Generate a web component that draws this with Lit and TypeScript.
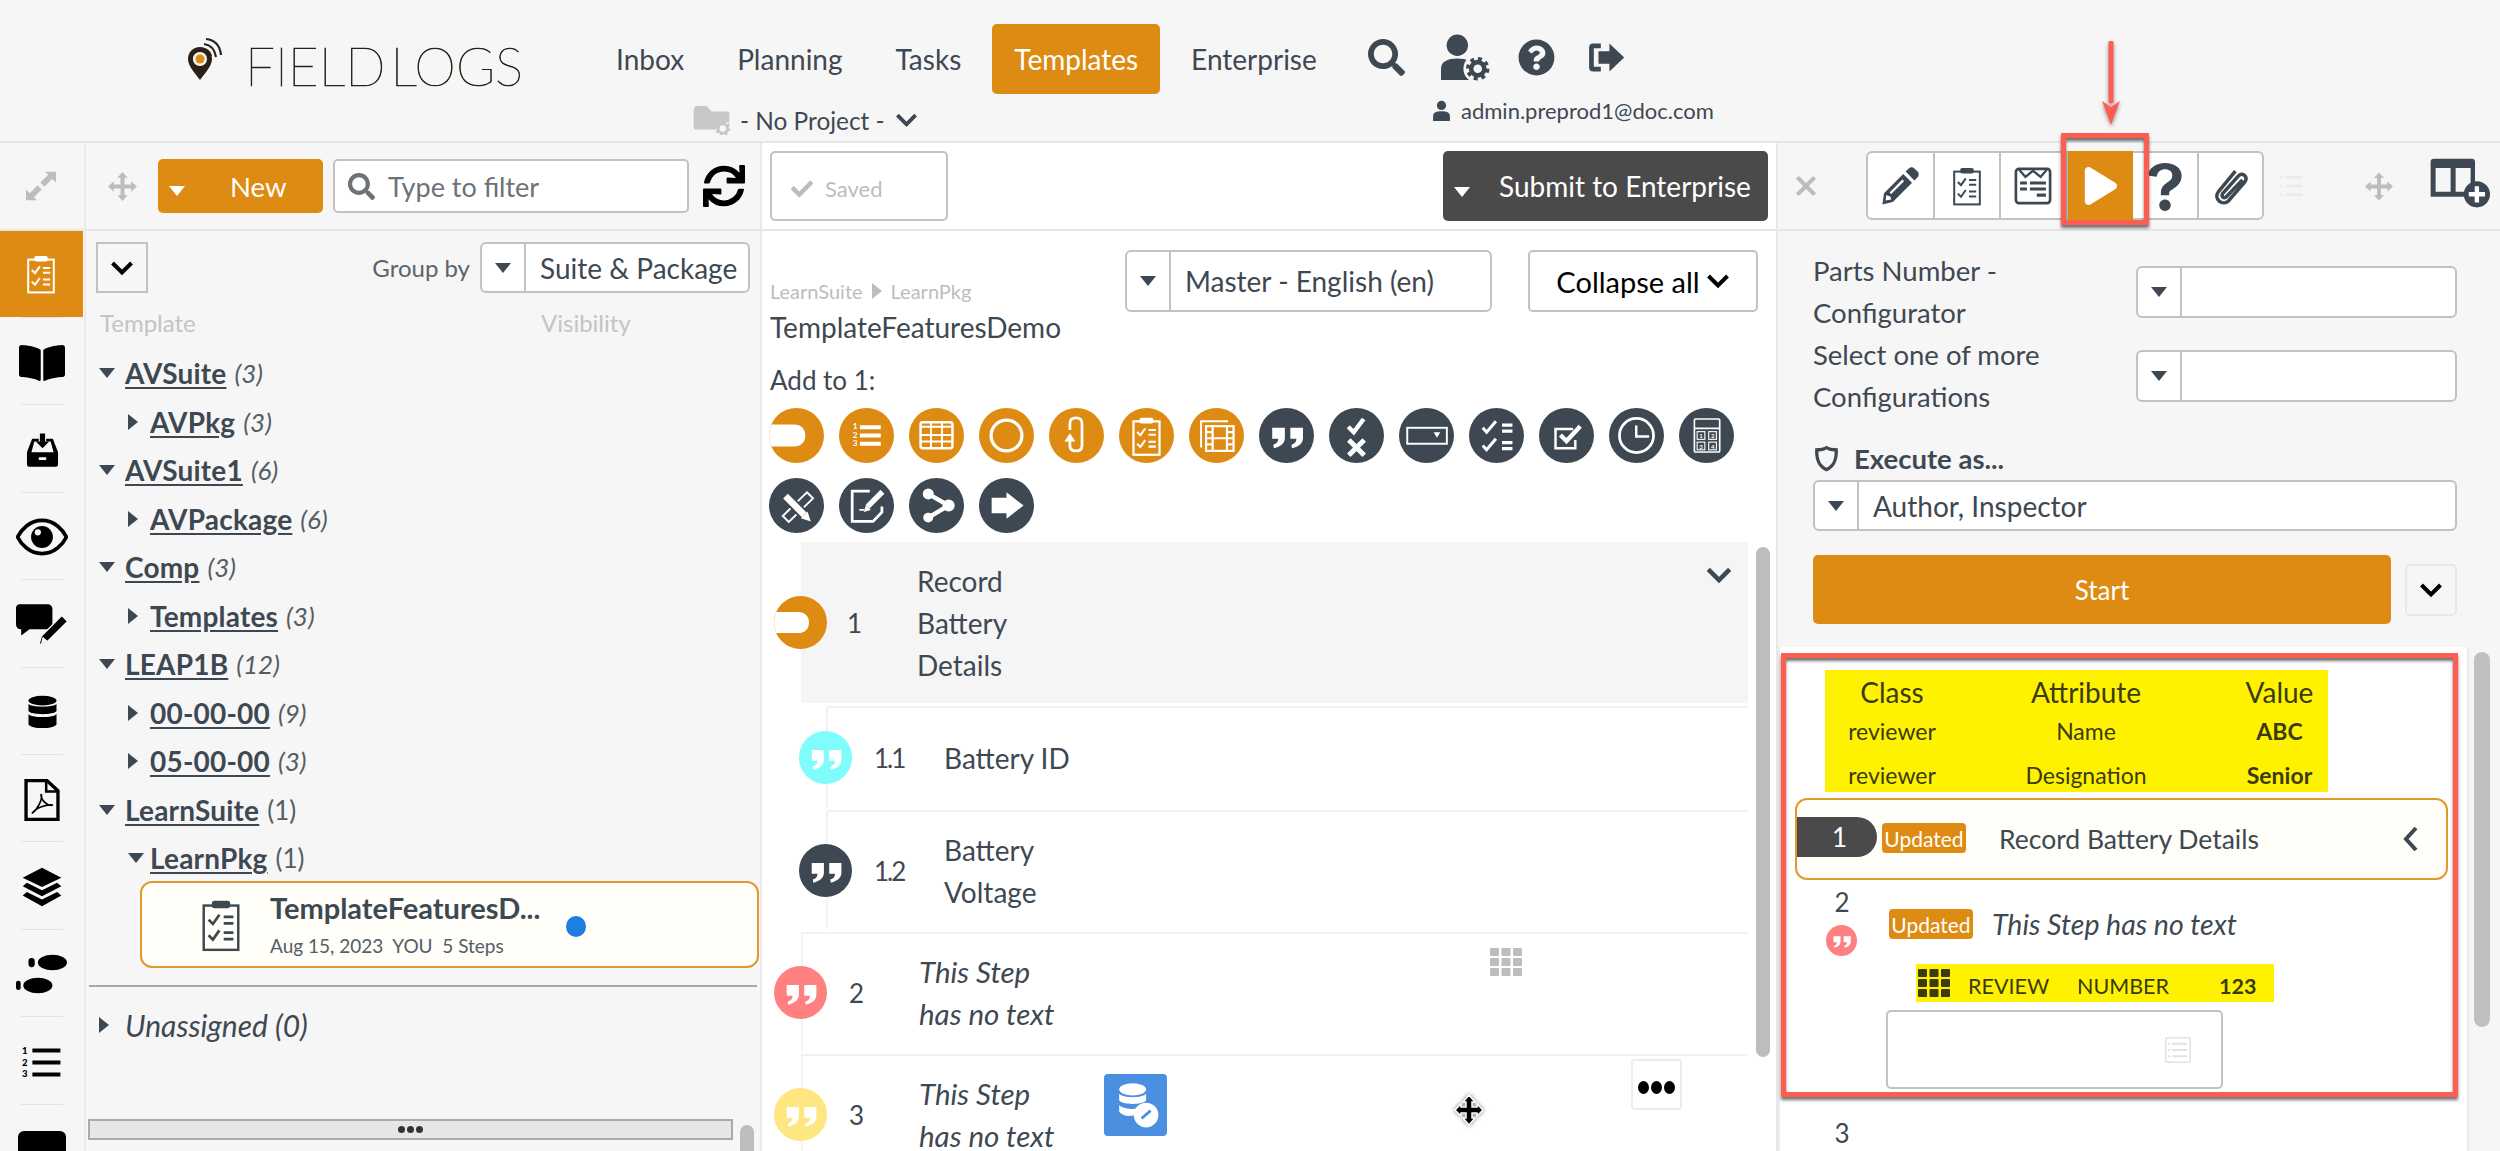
import { LitElement, html, css, svg } from "lit";
import { customElement } from "lit/decorators.js";

const ic = (body: unknown, vb: string, w: number, h: number, cls = "") =>
  html`<svg class="ic ${cls}" viewBox=${vb} width=${w} height=${h} fill="currentColor">${body}</svg>`;

const P = {
  search: svg`<path d="M505 442.7L405.3 343c-4.5-4.5-10.6-7-17-7H372c27.6-35.3 44-79.7 44-128C416 93.1 322.9 0 208 0S0 93.1 0 208s93.1 208 208 208c48.3 0 92.7-16.4 128-44v16.3c0 6.4 2.5 12.5 7 17l99.7 99.7c9.4 9.4 24.6 9.4 33.9 0l28.3-28.3c9.4-9.4 9.4-24.6.1-34zM208 336c-70.7 0-128-57.2-128-128 0-70.7 57.2-128 128-128 70.7 0 128 57.2 128 128 0 70.7-57.2 128-128 128z"/>`,
  question: svg`<path d="M504 256c0 136.997-111.043 248-248 248S8 392.997 8 256C8 119.083 119.043 8 256 8s248 111.083 248 248zM262.655 90c-54.497 0-89.255 22.957-116.549 63.758-3.536 5.286-2.353 12.415 2.715 16.258l34.699 26.31c5.205 3.947 12.621 3.008 16.665-2.122 17.864-22.658 30.113-35.797 57.303-35.797 20.429 0 45.698 13.148 45.698 32.958 0 14.976-12.363 22.667-32.534 33.976C247.128 238.528 216 254.941 216 296v4c0 6.627 5.373 12 12 12h56c6.627 0 12-5.373 12-12v-1.333c0-28.462 83.186-29.647 83.186-106.667 0-58.002-60.165-102-116.531-102zM256 338c-25.365 0-46 20.635-46 46 0 25.364 20.635 46 46 46s46-20.636 46-46c0-25.365-20.635-46-46-46z"/>`,
  check: svg`<path d="M173.898 439.404l-166.4-166.4c-9.997-9.997-9.997-26.206 0-36.204l36.203-36.204c9.997-9.998 26.207-9.998 36.204 0L192 312.69 432.095 72.596c9.997-9.997 26.207-9.997 36.204 0l36.203 36.204c9.997 9.997 9.997 26.206 0 36.204l-294.4 294.401c-9.998 9.997-26.207 9.997-36.204-.001z"/>`,
  sync: svg`<path d="M440.65 12.57l4 82.77A247.16 247.16 0 0 0 255.83 8C134.73 8 33.91 94.92 12.29 209.82A12 12 0 0 0 24.09 224h49.05a12 12 0 0 0 11.67-9.26 175.91 175.91 0 0 1 317-56.94l-101.46-4.86a12 12 0 0 0-12.57 12v47.41a12 12 0 0 0 12 12H500a12 12 0 0 0 12-12V12a12 12 0 0 0-12-12h-47.37a12 12 0 0 0-11.98 12.57zM255.83 432a175.61 175.61 0 0 1-146-77.8l101.8 4.87a12 12 0 0 0 12.57-12v-47.4a12 12 0 0 0-12-12H12a12 12 0 0 0-12 12V500a12 12 0 0 0 12 12h47.35a12 12 0 0 0 12-12.6l-4.15-82.57A247.17 247.17 0 0 0 255.83 504c121.11 0 221.93-86.92 243.55-201.82a12 12 0 0 0-11.8-14.18h-49.05a12 12 0 0 0-11.67 9.26A175.86 175.86 0 0 1 255.83 432z"/>`,
  book: svg`<path d="M542.22 32.05c-54.8 3.11-163.72 14.43-230.96 55.59-4.64 2.84-7.27 7.89-7.27 13.17v363.87c0 11.55 12.63 18.85 23.28 13.49 69.18-34.82 169.23-44.32 218.7-46.92 16.89-.89 30.02-14.43 30.02-30.66V62.75c.01-17.71-15.35-31.74-33.77-30.7zM264.73 87.64C197.5 46.48 88.58 35.17 33.78 32.05 15.36 31.01 0 45.04 0 62.75V400.6c0 16.24 13.13 29.78 30.02 30.66 49.49 2.6 149.59 12.11 218.77 46.95 10.62 5.35 23.21-1.94 23.21-13.46V100.63c0-5.29-2.62-10.14-7.27-12.99z"/>`,
  move: svg`<path d="M50 0L68 20H57V43H80V32L100 50L80 68V57H57V80H68L50 100L32 80H43V57H20V68L0 50L20 32V43H43V20H32Z"/>`,
  expand: svg`<path d="M62 8H94V40L83 29L60 52L48 40L71 17Z"/><path d="M38 92H6V60L17 71L40 48L52 60L29 83Z"/>`,
  user: svg`<circle cx="50" cy="26" r="22"/><path d="M10 100V76C10 60 26 54 50 54S90 60 90 76V100C90 100 10 100 10 100Z"/>`,
  times: svg`<path d="M20 8L50 38L80 8L92 20L62 50L92 80L80 92L50 62L20 92L8 80L38 50L8 20Z"/>`,
  signout: svg`<path d="M38 14H18C12 14 8 18 8 24V76C8 82 12 86 18 86H38V74H20V26H38Z"/><path d="M60 14L98 50L60 86V66H32V34H60Z"/>`,
  pencil: svg`<path d="M72 6C76 2 82 2 86 6L94 14C98 18 98 24 94 28L86 36L64 14ZM58 20L80 42L32 90L6 96L10 68ZM16 72L14 86L28 84L26 76L18 74ZM56 34L24 66L28 70L60 38Z" fill-rule="evenodd"/>`,
};

const clip = (sw = 6) => svg`<rect x="18" y="14" width="64" height="82" fill="none" stroke="currentColor" stroke-width=${sw}/>
  <rect x="33" y="5" width="34" height="14" rx="5"/>
  <path d="M27 40L35 48L47 31M27 69L35 77L47 60" fill="none" stroke="currentColor" stroke-width="5"/>
  <path d="M55 35H73M55 47H73M55 64H73M55 76H73" fill="none" stroke="currentColor" stroke-width="5"/>`;

const quote = svg`<path d="M24 36H47V54C47 64 40 70 27 73L26 67C32 65 35 62 35 56H24ZM57 36H80V54C80 64 73 70 60 73L59 67C65 65 68 62 68 56H57Z"/>`;

const dgt = (t: string, x: number, y: number, s: number, w = 700) =>
  svg`<text x=${x} y=${y} font-size=${s} font-weight=${w} font-family="Lato">${t}</text>`;

const circleGlyphs = [
  svg`<path d="M0 30H46C58 30 66 38 66 50S58 70 46 70H0Z" fill="#fff"/>`,
  svg`${dgt("1", 25, 39, 15)}${dgt("2", 25, 54, 15)}${dgt("3", 25, 69, 15)}<path d="M38 35H76M38 50H76M38 65H76" fill="none" stroke="currentColor" stroke-width="7"/>`,
  svg`<rect x="21" y="26" width="58" height="47" rx="4" fill="none" stroke="currentColor" stroke-width="4.5"/><path d="M21 34H79M21 49H79M21 61H79M40 26V73M60 26V73" fill="none" stroke="currentColor" stroke-width="3.5"/>`,
  svg`<circle cx="50" cy="50" r="28" fill="none" stroke="currentColor" stroke-width="6"/>`,
  svg`<path d="M38 58V68Q38 78 49 78Q60 78 60 68V28Q60 18 49 18Q38 18 38 28V40" fill="none" stroke="currentColor" stroke-width="5"/><path d="M28 61L38 46L48 61Z"/>`,
  svg`<g transform="translate(13 14) scale(.74)">${clip(5.5)}</g>`,
  svg`<path d="M22 72V24H71" fill="none" stroke="currentColor" stroke-width="3.5"/><rect x="31" y="33" width="50" height="45" fill="none" stroke="currentColor" stroke-width="4"/><path d="M43 33V78M69 33V78M31 44H43M31 55H43M31 66H43M69 44H81M69 55H81M69 66H81M43 55H69" fill="none" stroke="currentColor" stroke-width="4"/>`,
  quote,
  svg`<path d="M35 34L45 44L63 20" fill="none" stroke="currentColor" stroke-width="8"/><path d="M36 58L64 86M64 58L36 86" fill="none" stroke="currentColor" stroke-width="9"/>`,
  svg`<rect x="15" y="36" width="72" height="29" fill="none" stroke="currentColor" stroke-width="3.5"/><path d="M63 44H75L69 54Z"/>`,
  svg`<path d="M25 36L32 44L49 24M25 68L32 76L49 56" fill="none" stroke="currentColor" stroke-width="5.5"/><path d="M60 31H79M60 42H79M60 63H79M60 74H79" fill="none" stroke="currentColor" stroke-width="6"/>`,
  svg`<path d="M62 38H30V73H66V58" fill="none" stroke="currentColor" stroke-width="4.5"/><path d="M39 49L50 60L75 33" fill="none" stroke="currentColor" stroke-width="8"/>`,
  svg`<circle cx="50" cy="50" r="31" fill="none" stroke="currentColor" stroke-width="5"/><path d="M49.5 32V52H73" fill="none" stroke="currentColor" stroke-width="4.5"/>`,
  svg`<rect x="28" y="20" width="46" height="60" rx="2" fill="none" stroke="currentColor" stroke-width="3"/><path d="M28 37H74" stroke="currentColor" stroke-width="3"/><rect x="33" y="43" width="14" height="14" fill="none" stroke="currentColor" stroke-width="2"/><rect x="54" y="43" width="14" height="14" fill="none" stroke="currentColor" stroke-width="2"/><rect x="33" y="62" width="14" height="14" fill="none" stroke="currentColor" stroke-width="2"/><rect x="54" y="62" width="14" height="14" fill="none" stroke="currentColor" stroke-width="2"/>${dgt("1", 37, 55, 11)}${dgt("2", 58, 55, 11)}${dgt("3", 37, 74, 11)}${dgt("4", 58, 74, 11)}`,
  svg`<path d="M69 26L80 37L36 80L25 69Z" fill="none" stroke="currentColor" stroke-width="3.5"/><path d="M30 33L66 69" stroke="#3e4852" stroke-width="19"/><path d="M30 33L64 67" stroke="currentColor" stroke-width="12"/><path d="M58 73L70 61L76 79Z"/>`,
  svg`<path d="M56 24H24V79H62L78 62V52" fill="none" stroke="currentColor" stroke-width="5"/><path d="M52 52L79 25" stroke="currentColor" stroke-width="10"/><path d="M45 62L49 49L58 58Z"/><path d="M37 58H46" stroke="currentColor" stroke-width="3"/>`,
  svg`<circle cx="35" cy="29" r="10"/><circle cx="72" cy="50" r="11"/><circle cx="35" cy="72" r="9"/><path d="M35 29L72 50L35 72" fill="none" stroke="currentColor" stroke-width="8"/>`,
  svg`<path d="M23 36H50V26L81 50L50 74V64H23Z"/>`,
];

const tri = (d = "d") => html`<span class="tri-${d}"></span>`;

const select = (text: string, cls: string) =>
  html`<div class="sel ${cls}"><span class="car">${tri()}</span><span class="val">${text}</span></div>`;

const chevron = (w = 24, h = 16) =>
  html`<svg class="ic" viewBox="0 0 24 16" width=${w} height=${h}><path d="M2.5 3L12 12.5L21.5 3" fill="none" stroke="currentColor" stroke-width="4"/></svg>`;

const grid3 = svg`<rect x="0" y="0" width="9" height="8" rx="1"/><rect x="11.5" y="0" width="9" height="8" rx="1"/><rect x="23" y="0" width="9" height="8" rx="1"/><rect x="0" y="10" width="9" height="8" rx="1"/><rect x="11.5" y="10" width="9" height="8" rx="1"/><rect x="23" y="10" width="9" height="8" rx="1"/><rect x="0" y="20" width="9" height="8" rx="1"/><rect x="11.5" y="20" width="9" height="8" rx="1"/><rect x="23" y="20" width="9" height="8" rx="1"/>`;

const railIcons = [
  ic(clip(5), "0 0 100 100", 40, 40),
  ic(P.book, "0 0 576 512", 46, 42),
  ic(svg`<path d="M22 18H40V26H28L20 55H80L72 26H60V18H78L92 55V88Q92 94 86 94H14Q8 94 8 88V55ZM40 68V76H60V68Z" fill-rule="evenodd"/><path d="M43 4H57V26H68L50 44L32 26H43Z"/>`, "0 0 100 100", 37, 37),
  ic(svg`<path d="M50 18C26 18 10 36 3 50C10 64 26 82 50 82S90 64 97 50C90 36 74 18 50 18Z" fill="none" stroke="currentColor" stroke-width="7"/><circle cx="50" cy="50" r="21"/><circle cx="42" cy="41" r="6" fill="#f6f6f6"/>`, "0 0 100 100", 52, 52),
  ic(svg`<path d="M8 2H60C66 2 70 6 70 10V40C70 46 66 50 60 50H26L10 62V50H8C4 50 0 46 0 40V10C0 6 2 2 8 2Z"/><path d="M88 24L99 35L60 74L44 80L49 63ZM52 67L50 75L58 72Z" fill-rule="evenodd" stroke="#f6f6f6" stroke-width="2.5"/>`, "0 0 100 82", 52, 43),
  ic(svg`<ellipse cx="50" cy="16" rx="40" ry="14"/><path d="M10 26C18 36 82 36 90 26V46C82 58 18 58 10 46ZM10 54C18 66 82 66 90 54V84C82 98 18 98 10 84Z"/>`, "0 0 100 100", 35, 35),
  ic(svg`<path d="M12 4H62L88 28V96H12Z" fill="none" stroke="currentColor" stroke-width="8"/><path d="M60 4V30H88" fill="none" stroke="currentColor" stroke-width="6"/><path d="M26 82C40 72 52 48 48 36C46 48 62 66 76 62C60 60 36 68 26 82Z" fill="none" stroke="currentColor" stroke-width="4"/>`, "0 0 100 100", 42, 42),
  ic(svg`<path d="M50 4L96 28L50 50L4 28Z"/><path d="M14 40L50 58L86 40L96 48L50 72L4 48Z"/><path d="M14 62L50 80L86 62L96 70L50 96L4 70Z"/>`, "0 0 100 100", 42, 42),
  ic(svg`<ellipse cx="70" cy="18" rx="28" ry="15"/><rect x="24" y="9" width="12" height="18" rx="6"/><ellipse cx="42" cy="62" rx="28" ry="15"/><rect x="0" y="53" width="9" height="18" rx="4.5"/>`, "0 0 100 80", 52, 42),
  ic(svg`${dgt("1", 0, 26, 24, 900)}${dgt("2", 0, 54, 24, 900)}${dgt("3", 0, 82, 24, 900)}<path d="M26 16H96M26 46H96M26 76H96" fill="none" stroke="currentColor" stroke-width="10"/>`, "0 0 100 90", 42, 36),
];

@customElement("app-root")
export class AppRoot extends LitElement {
  static styles = css`
    :host { display: block; position: relative; width: 2500px; height: 1151px; overflow: hidden; font-family: "Lato", "Open Sans", sans-serif; font-size: 28px; color: #3e4852; background: #f6f6f6; }
    * { box-sizing: border-box; }
    .ic { display: block; flex: none; }
    .tri-d { display: block; width: 0; height: 0; border-left: 8px solid transparent; border-right: 8px solid transparent; border-top: 10px solid #3e4852; }
    .tri-r { display: block; width: 0; height: 0; border-top: 8px solid transparent; border-bottom: 8px solid transparent; border-left: 10px solid #3e4852; }

    header { height: 143px; display: flex; border-bottom: 2px solid #e6e6e6; }
    .logo { display: flex; width: 407px; margin-left: 187px; padding-top: 37px; align-items: flex-start; flex: none; }
    .logo-text { margin-left: 23px; font-size: 53px; line-height: 52px; font-weight: 100; color: #2b2118; -webkit-text-stroke: .7px #2b2118; word-spacing: -10px; white-space: nowrap; margin-top: 3px; }
    .center { width: 745px; padding-top: 24px; flex: none; }
    nav { display: flex; gap: 9px; height: 70px; }
    nav a { padding: 0 22px; display: flex; align-items: center; border-radius: 5px; white-space: nowrap; }
    nav a.on { background: #de8b13; color: #fff; }
    .project { display: flex; align-items: center; margin: 11px 0 0 99px; height: 30px; font-size: 24.4px; gap: 10px; }
    .folder { color: #c7c7c7; }
    .account { padding-top: 38px; width: 360px; margin-left: 29px; flex: none; }
    .acc-icons { display: flex; align-items: center; height: 38px; }
    .g36 { margin-left: 36px; }
    .g26 { margin-left: 26px; }
    .g31 { margin-left: 31px; }
    .acc-user { display: flex; align-items: center; height: 26px; margin: 21px 0 0 63px; font-size: 22px; gap: 9px; }

    .body { display: flex; height: 1008px; }
    .rail { width: 86px; border-right: 2px solid #ebebeb; color: #000; display: flex; flex-direction: column; align-items: center; flex: none; }
    .rail-head { height: 88px; width: 100%; border-bottom: 2px solid #e6e6e6; display: flex; align-items: center; justify-content: center; flex: none; color: #bdbdbd; padding-right: 2px; }
    .rail .item { height: 86.4px; width: 100%; display: flex; align-items: center; justify-content: center; flex: none; padding-top: 3px; }
    .rail .item.on { background: #de8b13; color: #fff; height: 86px; width: 84px; margin-right: 2px; padding-top: 0; }
    .rail hr { width: 42px; border: 0; height: 1px; background: #e2e2e2; margin: 0; flex: none; }
    .rail-stub { width: 48px; height: 40px; background: #000; border-radius: 6px; margin-top: 26px; flex: none; }

    .left { width: 674px; flex: none; }
    .tb { height: 88px; border-bottom: 2px solid #e6e6e6; display: flex; align-items: center; }
    .left .tb { padding-left: 22px; }
    .muted { color: #bdbdbd; }
    .new { width: 165px; height: 54px; margin-left: 21px; background: #de8b13; color: #fff; border-radius: 5px; display: flex; align-items: center; font-size: 27.5px; }
    .new .tri-d { border-top-color: #fff; margin: 10px 0 0 11px; }
    .new span.lbl { margin-left: 45px; }
    .filter { width: 356px; height: 54px; margin-left: 10px; border: 2px solid #c5c2bd; border-radius: 5px; background: #fff; display: flex; align-items: center; padding-left: 13px; gap: 13px; color: #6b7278; font-size: 27px; }
    .sync { margin-left: 14px; color: #000; }
    .grp { display: flex; align-items: center; margin-top: 11px; height: 51px; padding: 0 10px; }
    .chev-box { width: 52px; height: 51px; border: 2px solid #c5c2bd; display: flex; align-items: center; justify-content: center; color: #000; flex: none; }
    .grp-lbl { margin-left: auto; margin-right: 10px; font-size: 24px; color: #5b636a; }
    .sel { display: flex; align-items: center; background: #fff; border: 2px solid #c5c2bd; border-radius: 6px; overflow: hidden; flex: none; }
    .car { width: 44px; height: 100%; border-right: 2px solid #c5c2bd; display: flex; align-items: center; justify-content: center; flex: none; }
    .val { margin: 0 6px 0 14px; white-space: nowrap; overflow: hidden; min-width: 0; }
    .sel.grpby { width: 270px; height: 51px; }
    .heads { display: flex; margin-top: 17px; height: 26px; line-height: 26px; padding-left: 14px; font-size: 24px; color: #c4c4c4; }
    .heads span:first-child { width: 441px; }
    .tree { margin-top: 13px; }
    .row { height: 48.5px; display: flex; align-items: center; white-space: nowrap; }
    .row.l0 { padding-left: 13px; }
    .row.l1 { padding-left: 42px; }
    .row .a { width: 26px; flex: none; }
    .row.l1 .a { width: 22px; }
    .row u { font-weight: 700; text-underline-offset: 3px; letter-spacing: .2px; }
    .row i { margin-left: 8px; color: #555d64; font-size: 26px; }
    .row em { margin-left: 8px; font-style: normal; color: #555d64; font-size: 26px; }
    .card { margin: -1.5px 1px 0 54px; height: 87px; background: #fffef8; border: 2px solid #e09a2b; border-radius: 12px; display: flex; align-items: center; padding-left: 52px; }
    .card-t { margin-left: 22px; width: 296px; flex: none; }
    .card-t b { display: block; font-size: 29px; line-height: 32px; white-space: nowrap; }
    .card-t span { display: block; font-size: 19px; line-height: 24px; margin-top: 10px; white-space: pre; color: #555d64; }
    .dot { width: 20px; height: 21px; border-radius: 50%; background: #1e7fe0; flex: none; margin-top: 4px; }
    .divi { margin: 17px 3px 0 3px; height: 2px; background: #a9a9a9; }
    .un { margin-top: 14px; height: 48px; display: flex; align-items: center; padding-left: 13px; font-style: italic; font-size: 30px; }
    .un .tri-r { margin-right: 16px; }
    .split-row { display: flex; margin: 70px 0 0 2px; gap: 7px; }
    .splitter { width: 645px; height: 21px; background: #e6e6e6; border: 2px solid #aaa; display: flex; align-items: center; justify-content: center; gap: 2px; flex: none; }
    .splitter b { width: 7px; height: 7px; background: #333; border-radius: 50%; }
    .sb { background: #bdbdbd; border-radius: 7px; flex: none; }
    .split-row .sb { width: 14px; height: 40px; margin-top: 6px; }

    .mid { width: 1016px; flex: none; background: #fff; border-left: 2px solid #e8e8e8; }
    .mid .tb { justify-content: space-between; padding: 0 8px 0 8px; }
    .saved { width: 178px; height: 70px; border: 2px solid #c5c2bd; border-radius: 5px; display: flex; align-items: center; padding-left: 19px; gap: 12px; color: #bdbdbd; font-size: 22px; padding-top: 5px; }
    .sub-btn { width: 325px; height: 70px; background: #4a4a4a; color: #fff; border-radius: 5px; display: flex; align-items: center; }
    .sub-btn .tri-d { margin: 12px 0 0 11px; border-top-color: #fff; }
    .sub-btn span.lbl { margin-left: 29px; white-space: nowrap; }
    .title-row { display: flex; margin-top: 19px; height: 95px; padding-left: 8px; }
    .crumbs { width: 355px; padding-top: 29px; flex: none; }
    .crumb { font-size: 20px; line-height: 24px; color: #bdbdbd; display: flex; align-items: center; gap: 9px; }
    .crumb .tri-r { border-left-color: #bdbdbd; }
    .ttl { line-height: 36px; margin-top: 6px; }
    .sel.lang { width: 367px; height: 62px; }
    .coll { width: 230px; height: 62px; margin-left: 36px; border: 2px solid #c5c2bd; border-radius: 5px; display: flex; align-items: center; justify-content: center; gap: 6px; color: #000; font-size: 29px; flex: none; }
    .add { margin: 20px 0 0 8px; line-height: 30px; font-size: 26px; }
    .circles { display: flex; flex-wrap: wrap; gap: 15px; width: 990px; margin: 12.5px 0 0 7px; }
    .circ { width: 55px; height: 55px; border-radius: 50%; color: #fff; display: flex; align-items: center; justify-content: center; overflow: hidden; flex: none; }
    .o { background: #de8b13; }
    .d { background: #3e4852; }
    .cy { background: #7ffcfc; }
    .rd { background: #ff8080; }
    .yl { background: #ffe680; }
    .list { display: flex; margin-top: 9.5px; height: 620px; }
    .steps { width: 986px; flex: none; }
    .step { margin-left: 39px; width: 947px; display: flex; align-items: center; border-left: 2px solid #f2f2f2; border-top: 2px solid #f2f2f2; margin-top: 3px; line-height: 42px; }
    .step.sub { margin-left: 64px; width: 922px; }
    .step .circ { width: 53px; height: 53px; margin-left: -29px; }
    .step.first { margin-top: 0; height: 161px; background: #f5f5f5; border: 0; }
    .step.first .circ { margin-left: -27px; }
    .num { width: 70px; margin-left: 22px; flex: none; font-size: 26px; }
    .step.first .num { margin-left: 20px; }
    .num.n { letter-spacing: -2px; }
    .txt { width: 185px; flex: none; }
    .r1 { height: 101px; }
    .r2 { height: 119px; }
    .it { font-style: italic; font-size: 29.5px; }
    .corner { margin: -96px 15px 0 auto; color: #3e4852; }
    .gridi { margin: 14px 226px 0 auto; align-self: flex-start; color: #bdbdbd; }
    .db { width: 63px; height: 62px; background: #4a8fe0; border-radius: 4px; color: #fff; align-self: flex-start; margin-top: 18px; display: flex; align-items: center; justify-content: center; flex: none; }
    .dots { width: 51px; height: 51px; margin: 3px 66px 0 auto; align-self: flex-start; background: #fff; border: 2px solid #ececec; border-radius: 4px; display: flex; align-items: center; justify-content: center; gap: 2px; padding-top: 6px; }
    .dots b { width: 11px; height: 13px; background: #000; border-radius: 50%; }
    .mid .sb { width: 14px; height: 510px; margin: 5px 0 0 8px; }

    .right { width: 724px; flex: none; border-left: 2px solid #e8e8e8; display: flex; flex-direction: column; }
    .right .tb { padding-left: 16px; }
    .x { color: #bdbdbd; }
    .tools { margin-left: 48px; display: flex; height: 69px; width: 398px; background: #fff; border: 2px solid #c5c2bd; border-radius: 6px; margin-top: -1px; flex: none; }
    .tools > div { width: 66.5px; display: flex; align-items: center; justify-content: center; border-right: 2px solid #c5c2bd; flex: none; }
    .tools > div:last-child { border: 0; flex: 1; }
    .tools > div.on { background: #de8b13; color: #fff; width: 65px; border: 0; margin-top: -2px; margin-bottom: -2px; }
    .faded { margin-left: 13px; color: #ebebeb; }
    .mv { margin-left: 60px; }
    .addcol { margin: -6px 0 0 36px; color: #3e4852; }
    .form { padding-left: 35px; }
    .f-row { display: flex; align-items: center; height: 84px; line-height: 42px; }
    .f-row.top { margin-top: 19px; }
    .f-lbl { width: 323px; flex: none; font-size: 27.5px; }
    .sel.f { width: 321px; height: 52px; }
    .exec { display: flex; align-items: center; height: 30px; margin-top: 25px; gap: 14px; font-weight: 700; font-size: 27.5px; }
    .sel.as { width: 644px; height: 51px; margin-top: 7px; }
    .start-row { display: flex; align-items: center; margin-top: 24px; }
    .start { width: 578px; height: 69px; background: #de8b13; color: #fff; border-radius: 5px; display: flex; align-items: center; justify-content: center; font-size: 26px; }
    .more { width: 52px; height: 52px; margin-left: 14px; border: 2px solid #e8e8e8; border-radius: 5px; display: flex; align-items: center; justify-content: center; color: #000; }
    .lower { display: flex; margin-top: 23px; flex: 1; min-height: 0; }
    .sheet { width: 691px; background: #fff; flex: none; border-right: 2px solid #ececec; border-left: 2px solid #ececec; padding-top: 23px; overflow: hidden; }
    .lower .sb { width: 16px; height: 375px; margin: 5px 0 0 5px; background: #c0c0c0; border-radius: 8px; }
    .tbl { margin-left: 45px; width: 503px; height: 122px; background: #fff200; display: grid; grid-template-columns: 164px 194px 145px; grid-template-rows: 40px 42px 40px; color: #3b3a10; text-align: center; font-size: 23px; }
    .tbl > div { display: flex; align-items: center; justify-content: center; white-space: nowrap; }
    .tbl .c1 { padding-right: 30px; }
    .tbl .c3 { padding-left: 48px; font-weight: 700; }
    .tbl .h { font-size: 28px; font-weight: 400; padding-top: 4px; }
    .tbl .c3.h { font-weight: 400; }
    .tbl .l { padding-top: 5px; }
    .srow { margin: 6px 0 0 15px; width: 653px; height: 82px; background: #fffef8; border: 2px solid #e09a2b; border-radius: 12px; display: flex; align-items: center; }
    .pill { width: 80px; height: 40px; background: #4a4a4a; color: #fff; border-radius: 0 20px 20px 0; margin-top: -4px; padding-left: 35px; line-height: 40px; flex: none; font-size: 26px; }
    .upd { background: #de8b13; color: #fff; font-size: 21px; height: 30px; width: 84px; border-radius: 4px; display: flex; align-items: center; justify-content: center; flex: none; }
    .srow .upd { margin: -2px 0 0 5px; }
    .srow .t { margin-left: 33px; font-size: 26.5px; }
    .srow .chevl { margin-left: auto; margin-right: 27px; }
    .s2 { display: flex; }
    .s2l { margin-left: 45px; width: 34px; padding-top: 4px; flex: none; text-align: center; line-height: 36px; font-size: 26px; }
    .s2l .circ { width: 31px; height: 31px; background: #ff8080; margin: 5px 0 0 1px; }
    .s2r { margin-left: 27px; padding-top: 29px; }
    .s2top { display: flex; align-items: center; margin-left: 3px; height: 30px; }
    .s2top .it { margin-left: 19px; font-size: 28.5px; }
    .strip { margin: 25px 0 0 30px; width: 358px; height: 38px; background: #fff200; display: flex; align-items: center; color: #3b3a10; font-size: 21.5px; padding-left: 2px; }
    .strip .a { margin-left: 18px; width: 109px; padding-top: 6px; }
    .strip .b { width: 142px; padding-top: 6px; }
    .strip .c { font-weight: 700; padding-top: 6px; }
    .inp { margin-top: 8px; width: 337px; height: 79px; border: 2px solid #c5c2bd; border-radius: 5px; display: flex; align-items: center; justify-content: flex-end; padding-right: 30px; color: #e2e2e2; }
    .n3 { margin: 26px 0 0 45px; width: 34px; line-height: 36px; text-align: center; font-size: 26px; }
    .t3 { margin: -6px 0 0 117px; font-style: italic; line-height: 36px; white-space: nowrap; font-size: 28.5px; }

    .mark { position: absolute; border: 5px solid #ff5c52; box-shadow: 0 3px 3px rgba(0,0,0,.55), inset 0 3px 3px rgba(0,0,0,.55); pointer-events: none; }
    .mark.a { left: 2061px; top: 133px; width: 88px; height: 92px; }
    .mark.b { left: 1781px; top: 653px; width: 677px; height: 444px; }
    .arrow { position: absolute; left: 2098px; top: 41px; filter: drop-shadow(0 2px 2px rgba(0,0,0,.4)); }
    .cursor { position: absolute; left: 1454px; top: 1094px; filter: drop-shadow(0 0 2px rgba(0,0,0,.5)); }
  `;

  render() {
    const chev = chevron();
    const treeRows: [string, string, string, string][] = [
      ["l0", "d", "AVSuite", "(3)"], ["l1", "r", "AVPkg", "(3)"], ["l0", "d", "AVSuite1", "(6)"], ["l1", "r", "AVPackage", "(6)"],
      ["l0", "d", "Comp", "(3)"], ["l1", "r", "Templates", "(3)"], ["l0", "d", "LEAP1B", "(12)"], ["l1", "r", "00-00-00", "(9)"], ["l1", "r", "05-00-00", "(3)"],
    ];
    return html`
      <header>
        <div class="logo">
          <svg class="ic" viewBox="0 0 35 43" width="35" height="43"><path d="M13 10C6 10 1 15 1 22C1 29 8 36 13 43C18 36 25 29 25 22C25 15 20 10 13 10ZM13 15C17 15 20 18 20 22C20 26 17 29 13 29C9 29 6 26 6 22C6 18 9 15 13 15Z" fill="#2b2118" fill-rule="evenodd"/><circle cx="13" cy="22" r="4.5" fill="#de8b13"/><path d="M17 7C24 8 28 13 29 20M19 2C28 3 33 9 34 18M17 12C20 13 23 15 24 19" fill="none" stroke="#2b2118" stroke-width="2.2"/></svg>
          <span class="logo-text">FIELD LOGS</span>
        </div>
        <div class="center">
          <nav><a>Inbox</a><a>Planning</a><a>Tasks</a><a class="on">Templates</a><a>Enterprise</a></nav>
          <div class="project">
            ${ic(svg`<path d="M0 6C0 3 2 1 4 1H14L19 7H36C38 7 38 9 38 10V19C32 17 26 20 24 26H2C1 26 0 25 0 24Z"/><circle cx="31" cy="25" r="5" fill="none" stroke="currentColor" stroke-width="3"/><circle cx="31" cy="25" r="7" fill="none" stroke="currentColor" stroke-width="2" stroke-dasharray="3 2.5"/>`, "0 0 38 32", 37, 30, "folder")}
            <span>- No Project -</span>${chevron(23, 16)}
          </div>
        </div>
        <div class="account">
          <div class="acc-icons">
            ${ic(P.search, "0 0 512 512", 37, 37)}
            ${ic(svg`<circle cx="32" cy="22" r="21"/><path d="M0 90V68C0 54 14 48 32 48S64 54 64 68V90Z"/><circle cx="72" cy="68" r="28" fill="#f6f6f6"/><circle cx="72" cy="68" r="19" fill="none" stroke="currentColor" stroke-width="8" stroke-dasharray="7.5 7.4"/><circle cx="72" cy="68" r="13" fill="none" stroke="currentColor" stroke-width="9"/>`, "0 0 100 92", 51, 47, "g36")}
            ${ic(P.question, "0 0 512 512", 37, 37, "g26")}
            ${ic(P.signout, "0 0 100 100", 39, 39, "g31")}
          </div>
          <div class="acc-user">${ic(P.user, "0 0 100 100", 21, 23)}<span>admin.preprod1@doc.com</span></div>
        </div>
      </header>
      <div class="body">
        <div class="rail">
          <div class="rail-head">${ic(P.expand, "0 0 100 100", 34, 34)}</div>
          ${railIcons.map((r, i) => html`<div class="item ${i === 0 ? "on" : ""}">${r}</div><hr />`)}
          <div class="rail-stub"></div>
        </div>

        <section class="left">
          <div class="tb">
            ${ic(P.move, "0 0 100 100", 29, 29, "muted")}
            <div class="new">${tri()}<span class="lbl">New</span></div>
            <div class="filter">${ic(P.search, "0 0 512 512", 27, 27)}<span>Type to filter</span></div>
            ${ic(P.sync, "0 0 512 512", 42, 42, "sync")}
          </div>
          <div class="grp">
            <div class="chev-box">${chev}</div>
            <span class="grp-lbl">Group by</span>
            ${select("Suite & Package", "grpby")}
          </div>
          <div class="heads"><span>Template</span><span>Visibility</span></div>
          <div class="tree">
            ${treeRows.map(([l, d, n, c]) => html`<div class="row ${l}"><span class="a">${tri(d)}</span><u>${n}</u><i>${c}</i></div>`)}
            <div class="row l0"><span class="a">${tri()}</span><u>LearnSuite</u><em>(1)</em></div>
            <div class="row l1"><span class="a">${tri()}</span><u>LearnPkg</u><em>(1)</em></div>
          </div>
          <div class="card">
            ${ic(clip(4.5), "0 0 100 100", 54, 56)}
            <div class="card-t"><b>TemplateFeaturesD...</b><span>Aug 15, 2023  YOU  5 Steps</span></div>
            <div class="dot"></div>
          </div>
          <div class="divi"></div>
          <div class="un">${tri("r")}<span>Unassigned (0)</span></div>
          <div class="split-row">
            <div class="splitter"><b></b><b></b><b></b></div>
            <div class="sb"></div>
          </div>
        </section>

        <section class="mid">
          <div class="tb">
            <div class="saved">${ic(P.check, "0 0 512 512", 22, 22)}<span>Saved</span></div>
            <div class="sub-btn">${tri()}<span class="lbl">Submit to Enterprise</span></div>
          </div>
          <div class="title-row">
            <div class="crumbs">
              <div class="crumb"><span>LearnSuite</span>${tri("r")}<span>LearnPkg</span></div>
              <div class="ttl">TemplateFeaturesDemo</div>
            </div>
            ${select("Master - English (en)", "lang")}
            <div class="coll"><span>Collapse all</span>${chevron(24, 16)}</div>
          </div>
          <div class="add">Add to 1:</div>
          <div class="circles">
            ${circleGlyphs.map((g, i) => html`<div class="circ ${i < 7 ? "o" : "d"}">${ic(g, "0 0 100 100", 55, 55)}</div>`)}
          </div>
          <div class="list">
            <div class="steps">
              <div class="step first">
                <div class="circ o">${ic(circleGlyphs[0], "0 0 100 100", 53, 53)}</div>
                <div class="num">1</div>
                <div class="txt">Record<br />Battery<br />Details</div>
                <div class="corner">${chevron(28, 18)}</div>
              </div>
              <div class="step sub r1">
                <div class="circ cy">${ic(quote, "0 0 100 100", 53, 53)}</div>
                <div class="num n">1.1</div>
                <div class="txt">Battery ID</div>
              </div>
              <div class="step sub r2">
                <div class="circ d">${ic(quote, "0 0 100 100", 53, 53)}</div>
                <div class="num n">1.2</div>
                <div class="txt">Battery<br />Voltage</div>
              </div>
              <div class="step r2">
                <div class="circ rd">${ic(quote, "0 0 100 100", 53, 53)}</div>
                <div class="num">2</div>
                <div class="txt it">This Step<br />has no text</div>
                ${ic(grid3, "0 0 32 28", 32, 28, "gridi")}
              </div>
              <div class="step r2">
                <div class="circ yl">${ic(quote, "0 0 100 100", 53, 53)}</div>
                <div class="num">3</div>
                <div class="txt it">This Step<br />has no text</div>
                <div class="db">${ic(svg`<ellipse cx="44" cy="22" rx="24" ry="11"/><path d="M20 30C26 38 62 38 68 30V42C62 50 26 50 20 42ZM20 50C26 58 50 58 52 56V66C40 72 26 70 20 62Z"/><circle cx="68" cy="68" r="22"/><path d="M60 74L76 60" stroke="#4a8fe0" stroke-width="5"/>`, "0 0 100 100", 56, 56)}</div>
                <div class="dots"><b></b><b></b><b></b></div>
              </div>
            </div>
            <div class="sb"></div>
          </div>
        </section>

        <section class="right">
          <div class="tb">
            ${ic(P.times, "0 0 100 100", 24, 24, "x")}
            <div class="tools">
              <div>${ic(P.pencil, "0 0 100 100", 40, 44)}</div>
              <div>${ic(clip(5), "0 0 100 100", 40, 40)}</div>
              <div>${ic(svg`<rect x="5" y="5" width="90" height="90" rx="8" fill="none" stroke="currentColor" stroke-width="7"/><path d="M14 8L30 26L50 10L70 26L86 8" fill="none" stroke="currentColor" stroke-width="6"/><path d="M16 42H34M42 42H84M16 58H34M42 58H84M60 74H84" fill="none" stroke="currentColor" stroke-width="8"/>`, "0 0 100 100", 38, 38)}</div>
              <div class="on">${ic(svg`<path d="M12 12C12 4 20 0 26 4L88 42C94 46 94 54 88 58L26 96C20 100 12 96 12 88Z"/>`, "0 0 100 100", 40, 40)}</div>
              <div>${ic(svg`<path d="M34 32C36 22 42 18 50 18C58 18 64 22 64 30C64 38 58 41 52 45C46 49 42 54 42 64V68H58V64C58 60 62 58 68 54C76 49 82 42 82 30C82 16 68 6 50 6C32 6 20 16 16 30ZM50 76C44 76 39 81 39 87C39 93 44 98 50 98C56 98 61 93 61 87C61 81 56 76 50 76Z"/>`, "0 0 100 100", 52, 52)}</div>
              <div>${ic(svg`<path d="M76 36L40 74C34 80 26 74 32 66L68 26C76 18 90 30 82 40L44 84C32 96 8 80 22 62L60 16" fill="none" stroke="currentColor" stroke-width="8"/>`, "0 0 100 100", 44, 44)}</div>
            </div>
            ${ic(svg`<circle cx="7" cy="14" r="6"/><circle cx="7" cy="50" r="6"/><circle cx="7" cy="86" r="6"/><path d="M26 14H98M26 50H98M26 86H98" stroke="currentColor" stroke-width="12"/>`, "0 0 100 100", 28, 24, "faded")}
            ${ic(P.move, "0 0 100 100", 28, 29, "muted mv")}
            ${ic(svg`<path d="M2 6C2 3 4 1 7 1H68C71 1 73 3 73 6V62H2ZM10 16V54H34V16ZM42 16V54H66V16Z" fill-rule="evenodd"/><circle cx="76" cy="58" r="21"/><path d="M76 45V71M63 58H89" stroke="#fff" stroke-width="7"/>`, "0 0 98 80", 62, 50, "addcol")}
          </div>
          <div class="form">
            <div class="f-row top"><div class="f-lbl">Parts Number -<br />Configurator</div>${select("", "f")}</div>
            <div class="f-row"><div class="f-lbl">Select one of more<br />Configurations</div>${select("", "f")}</div>
            <div class="exec">${ic(svg`<path d="M50 3C60 10 72 12 92 12C94 50 86 82 50 98C14 82 6 50 8 12C28 12 40 10 50 3ZM50 16C42 22 32 24 20 24C20 52 26 72 50 84C74 72 80 52 80 24C68 24 58 22 50 16Z" fill-rule="evenodd"/>`, "0 0 100 100", 27, 29)}<span>Execute as...</span></div>
            ${select("Author, Inspector", "as")}
            <div class="start-row"><div class="start">Start</div><div class="more">${chev}</div></div>
          </div>
          <div class="lower">
            <div class="sheet">
              <div class="tbl">
                <div class="c1 h">Class</div><div class="h">Attribute</div><div class="c3 h">Value</div>
                <div class="c1">reviewer</div><div>Name</div><div class="c3">ABC</div>
                <div class="c1 l">reviewer</div><div class="l">Designation</div><div class="c3 l">Senior</div>
              </div>
              <div class="srow">
                <div class="pill">1</div>
                <div class="upd">Updated</div>
                <div class="t">Record Battery Details</div>
                <span class="chevl">${ic(svg`<path d="M13 2L3 13L13 24" fill="none" stroke="currentColor" stroke-width="4"/>`, "0 0 16 26", 16, 26)}</span>
              </div>
              <div class="s2">
                <div class="s2l">2<div class="circ">${ic(quote, "0 0 100 100", 31, 31)}</div></div>
                <div class="s2r">
                  <div class="s2top"><div class="upd">Updated</div><div class="it">This Step has no text</div></div>
                  <div class="strip">${ic(grid3, "0 0 32 28", 32, 28)}<span class="a">REVIEW</span><span class="b">NUMBER</span><span class="c">123</span></div>
                  <div class="inp">${ic(svg`<rect x="3" y="3" width="94" height="94" rx="6" fill="none" stroke="currentColor" stroke-width="6"/><path d="M28 26H84M28 50H84M28 74H84M12 26H20M12 50H20M12 74H20" stroke="currentColor" stroke-width="7"/>`, "0 0 100 100", 26, 26)}</div>
                </div>
              </div>
              <div class="n3">3</div>
              <div class="t3">This Step has no text</div>
            </div>
            <div class="sb"></div>
          </div>
        </section>
      </div>
      <div class="mark a"></div>
      <div class="mark b"></div>
      <svg class="arrow" viewBox="0 0 26 86" width="26" height="86"><path d="M13 2V60" stroke="#ff5c52" stroke-width="5" stroke-linecap="round"/><path d="M4 60L13 84L22 60L13 66Z" fill="#ff5c52"/></svg>
      <svg class="cursor" viewBox="0 0 30 32" width="30" height="32"><path d="M15 1L21 8H18V13H23V10L29 16L23 22V19H18V24H21L15 31L9 24H12V19H7V22L1 16L7 10V13H12V8H9Z" fill="#000" stroke="#fff" stroke-width="1.5"/></svg>
    `;
  }
}
